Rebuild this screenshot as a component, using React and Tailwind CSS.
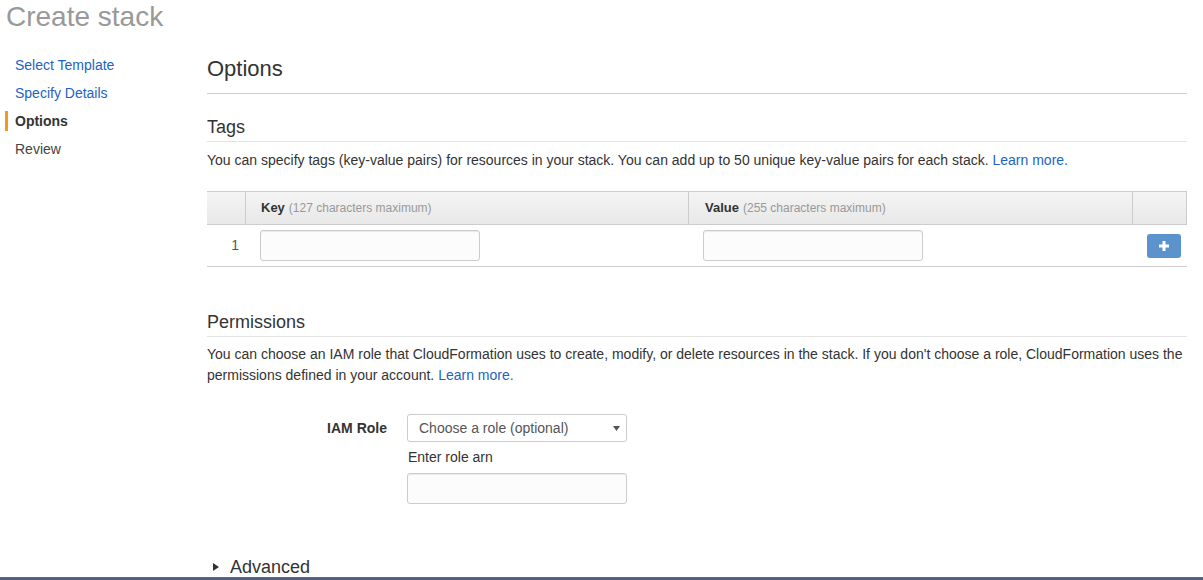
import React from 'react';

const steps = [
  { label: 'Select Template', link: true },
  { label: 'Specify Details', link: true },
  { label: 'Options', active: true },
  { label: 'Review' },
];

const inputCls =
  'block w-[220px] h-[31px] rounded-[3px] border border-[#ccc] bg-[#fcfcfc] shadow-[inset_0_1px_1px_rgba(0,0,0,0.075)] outline-none px-[8px] text-[14px]';

const App = () => {
  return (
    <div className="h-[580px] w-[1203px] overflow-hidden bg-white flex flex-col text-[#333] text-[14px] font-['Liberation_Sans',Arial,sans-serif]">
      <div className="flex-1 min-h-0 overflow-hidden">
        <h1 className="pt-[1px] pl-[6px] text-[28px] leading-[31px] text-[#999]">Create stack</h1>

        <div className="flex">
          {/* wizard steps */}
          <nav className="w-[207px] shrink-0 pt-[19px]">
            {steps.map((s) => (
              <div key={s.label} className="flex items-center h-[28px] leading-[28px]">
                <span
                  className={`ml-[5px] mr-[7px] w-[3px] h-[20px] ${s.active ? 'bg-[#f7981d]' : 'bg-transparent'}`}
                />
                <span
                  className={
                    s.active ? 'font-bold text-[#333]' : s.link ? 'text-[#1c64c4]' : 'text-[#444]'
                  }
                >
                  {s.label}
                </span>
              </div>
            ))}
          </nav>

          <main className="w-[980px] shrink-0 pt-[25px]">
            <h2 className="text-[22px] leading-[24px] pb-[12px] border-b border-[#ccc]">Options</h2>

            {/* Tags */}
            <h3 className="mt-[23px] text-[18px] leading-[20px] pb-[4px] border-b border-[#e3e3e3]">Tags</h3>
            <p className="mt-[8px] leading-[20px]">
              You can specify tags (key-value pairs) for resources in your stack. You can add up to 50 unique
              key-value pairs for each stack. <a className="text-[#1c64c4]">Learn more.</a>
            </p>

            <div className="mt-[21px] border-b border-[#ccc]">
              <div className="grid grid-cols-[38px_443px_444px_55px] h-[34px] border-y border-r border-[#ccc] bg-gradient-to-b from-[#f4f4f4] to-[#e8e8e8]">
                <div />
                <div className="border-l border-[#ccc] flex items-center pl-[15px]">
                  <span className="font-bold text-[13px] text-[#333]">Key</span>
                  <span className="ml-[4px] text-[12px] text-[#999]">(127 characters maximum)</span>
                </div>
                <div className="border-l border-[#ccc] flex items-center pl-[16px]">
                  <span className="font-bold text-[13px] text-[#333]">Value</span>
                  <span className="ml-[4px] text-[12px] text-[#999]">(255 characters maximum)</span>
                </div>
                <div className="border-l border-[#ccc]" />
              </div>
              <div className="grid grid-cols-[38px_443px_444px_55px] h-[41px] items-center">
                <div className="text-right pr-[6px] text-[#555]">1</div>
                <div className="pl-[15px]">
                  <input className={inputCls} />
                </div>
                <div className="pl-[15px]">
                  <input className={inputCls} />
                </div>
                <div className="pl-[15px]">
                  <button className="w-[34px] h-[24px] rounded-[3px] bg-[#5b93cc] flex items-center justify-center">
                    <svg width="10" height="10" viewBox="0 0 10 10">
                      <rect x="3.5" y="0" width="3" height="10" fill="#fff" />
                      <rect x="0" y="3.5" width="10" height="3" fill="#fff" />
                    </svg>
                  </button>
                </div>
              </div>
            </div>

            {/* Permissions */}
            <h3 className="mt-[45px] text-[18px] leading-[20px] pb-[4px] border-b border-[#e3e3e3]">Permissions</h3>
            <div className="mt-[7px] leading-[21px]">
              <span>
                You can choose an IAM role that CloudFormation uses to create, modify, or delete resources in the
                stack. If you don't choose a role, CloudFormation uses the permissions defined in your account.
              </span>{' '}
              <span className="text-[#1c64c4]">Learn more.</span>
            </div>

            <div className="mt-[28px] flex">
              <div className="w-[180px] h-[28px] flex items-center justify-end font-bold">IAM Role</div>
              <div className="ml-[20px]">
                <div className="w-[220px] h-[28px] rounded-[3px] border border-[#ccc] bg-white flex items-center justify-between pl-[11px] pr-[6px] text-[#555]">
                  <span>Choose a role (optional)</span>
                  <svg width="7" height="5" viewBox="0 0 7 5">
                    <path d="M0 0 L7 0 L3.5 5 Z" fill="#555" />
                  </svg>
                </div>
                <div className="mt-[5px] leading-[20px] pl-[1px]">Enter role arn</div>
                <input className={`${inputCls} mt-[6px]`} />
              </div>
            </div>

            {/* Advanced */}
            <div className="mt-[53px] flex items-center h-[20px]">
              <svg className="ml-[6px]" width="6" height="8" viewBox="0 0 6 8">
                <path d="M0 0 L6 4 L0 8 Z" fill="#333" />
              </svg>
              <span className="ml-[11px] text-[18px] leading-[20px]">Advanced</span>
            </div>
          </main>
        </div>
      </div>
      <div className="h-[3px] shrink-0 border-t border-[#2f74c0] bg-[#4d5f7f]" />
    </div>
  );
};

export default App;
